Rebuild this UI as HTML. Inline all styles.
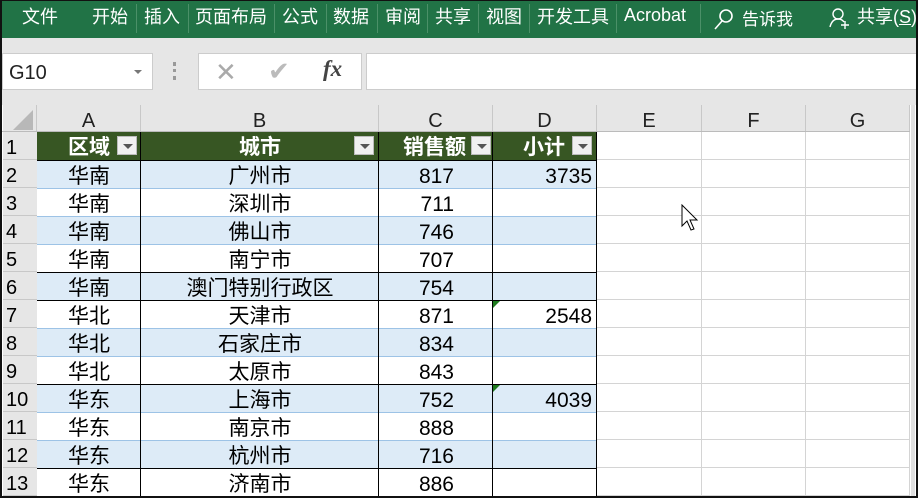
<!DOCTYPE html><html><head><meta charset="utf-8"><style>
*{margin:0;padding:0;box-sizing:border-box}
body{width:918px;height:498px;overflow:hidden;background:#fff;position:relative;font-family:"Liberation Sans","Noto Sans CJK SC",sans-serif}
.a{position:absolute}
.rib{left:0;top:0;width:918px;height:38px;background:#217346;color:#fff;font-size:18px}
.rib span{position:absolute;top:3px}
.sep{position:absolute;top:4px;width:1px;height:29px;background:#4b9068}
.cell{position:absolute;height:28px;line-height:33px;font-size:21px;color:#000;white-space:nowrap}
.hd{position:absolute;top:105px;height:27px;line-height:32px;text-align:center;font-size:20px;color:#222;background:#e6e6e6;border-right:1px solid #c8c8c8}
.rn{position:absolute;left:3px;width:34px;height:28px;line-height:33px;font-size:20px;background:#e6e6e6;border-bottom:1px solid #c8c8c8;padding-left:3px}
.dd{position:absolute;width:20px;height:19px;background:#f0f0f0;border:1px solid #bbb}
.dd:after{content:"";position:absolute;left:5px;top:7px;border-left:5px solid transparent;border-right:5px solid transparent;border-top:5px solid #555}
</style></head><body>
<div class="a rib">
<span style="left:22px">文件</span>
<span style="left:92px">开始</span><div class="sep" style="left:136px"></div>
<span style="left:144px">插入</span><div class="sep" style="left:188px"></div>
<span style="left:195px">页面布局</span><div class="sep" style="left:274px"></div>
<span style="left:282px">公式</span><div class="sep" style="left:326px"></div>
<span style="left:333px">数据</span><div class="sep" style="left:377px"></div>
<span style="left:385px">审阅</span><div class="sep" style="left:427px"></div>
<span style="left:435px">共享</span><div class="sep" style="left:478px"></div>
<span style="left:486px">视图</span><div class="sep" style="left:529px"></div>
<span style="left:537px">开发工具</span><div class="sep" style="left:616px"></div>
<span style="left:624px;top:5px">Acrobat</span><div class="sep" style="left:700px"></div>
<svg class="a" style="left:712px;top:7px" width="24" height="24"><circle cx="14" cy="9" r="6" fill="none" stroke="#fff" stroke-width="1.6"/><line x1="10" y1="14" x2="3" y2="22" stroke="#fff" stroke-width="1.6"/></svg>
<span style="left:742px;font-size:17px;top:5px">告诉我</span>
<svg class="a" style="left:828px;top:6px" width="24" height="24"><circle cx="10" cy="8" r="5" fill="none" stroke="#fff" stroke-width="1.4"/><path d="M2 21 Q4 13 10 13 Q14 13 16 16" fill="none" stroke="#fff" stroke-width="1.4"/><path d="M17 15v8M13 19h8" stroke="#fff" stroke-width="1.4"/></svg>
<span style="left:857px">共享(<u>S</u>)</span>
</div>
<div class="a" style="left:0;top:38px;width:918px;height:67px;background:#e6e6e6"></div>
<div class="a" style="left:2px;top:53px;width:151px;height:37px;background:#fff;border:1px solid #ccc;font-size:20px;line-height:38px;padding-left:6px;color:#222">G10</div>
<div class="a" style="left:134px;top:70px;border-left:4px solid transparent;border-right:4px solid transparent;border-top:4px solid #777"></div>
<div class="a" style="left:173px;top:62px;width:3px;height:18px;border-left:3px dotted #999"></div>
<div class="a" style="left:198px;top:53px;width:164px;height:37px;background:#fff;border:1px solid #ccc"></div>
<div class="a" style="left:215px;top:57px;font-size:26px;color:#aaa">✕</div>
<div class="a" style="left:268px;top:56px;font-size:26px;color:#bbb">✔</div>
<div class="a" style="left:323px;top:56px;font-size:23px;font-style:italic;font-weight:bold;font-family:'Liberation Serif',serif;color:#444">fx</div>
<div class="a" style="left:366px;top:53px;width:552px;height:37px;background:#fff;border:1px solid #ccc"></div>
<div class="a" style="left:3px;top:105px;width:34px;height:27px;background:#e6e6e6;border-right:1px solid #c8c8c8"></div>
<div class="a" style="left:13px;top:110px;width:0;height:0;border-left:20px solid transparent;border-bottom:20px solid #b8b8b8"></div>
<div class="hd" style="left:37px;width:104px">A</div>
<div class="hd" style="left:141px;width:238px">B</div>
<div class="hd" style="left:379px;width:114px">C</div>
<div class="hd" style="left:493px;width:104px">D</div>
<div class="hd" style="left:597px;width:105px">E</div>
<div class="hd" style="left:702px;width:104px">F</div>
<div class="hd" style="left:806px;width:104px">G</div>
<div class="a" style="left:0;top:131px;width:910px;height:1px;background:#bbb"></div>
<div id="g"></div>
<script>
var h='';
var A=['华南','华南','华南','华南','华南','华北','华北','华北','华东','华东','华东','华东'];
var B=['广州市','深圳市','佛山市','南宁市','澳门特别行政区','天津市','石家庄市','太原市','上海市','南京市','杭州市','济南市'];
var C=[817,711,746,707,754,871,834,843,752,888,716,886];
var D={2:3735,7:2548,10:4039};
for(var r=1;r<=13;r++){var t=132+(r-1)*28;
h+='<div class="rn" style="top:'+t+'px">'+r+'</div>';
if(r>1){var bg=(r%2==0)?'#ddebf7':'#fff';
h+='<div class="a" style="left:37px;top:'+t+'px;width:560px;height:28px;background:'+bg+'"></div>';
h+='<div class="a" style="left:37px;top:'+t+'px;width:560px;height:1px;background:'+([2,6,7,10,13].indexOf(r)>=0?'#000':'#9dc3e6')+'"></div>';
var i=r-2;
h+='<div class="cell" style="left:37px;width:104px;text-align:center;top:'+t+'px">'+A[i]+'</div>';
h+='<div class="cell" style="left:141px;width:238px;text-align:center;top:'+t+'px">'+B[i]+'</div>';
h+='<div class="cell" style="left:379px;width:113px;text-align:right;padding-right:38px;top:'+t+'px">'+C[i]+'</div>';
if(D[r])h+='<div class="cell" style="left:493px;width:103px;text-align:right;padding-right:4px;top:'+t+'px">'+D[r]+'</div>';
if(r==7||r==10)h+='<div class="a" style="left:493px;top:'+(t+1)+'px;border-top:7px solid #1e7b1e;border-right:7px solid transparent"></div>';
}
h+='<div class="a" style="left:597px;top:'+(t+27)+'px;width:313px;height:1px;background:#d4d4d4"></div>';
}
h+='<div class="a" style="left:37px;top:132px;width:560px;height:28px;background:#375623"></div>';
h+='<div class="a" style="left:37px;top:132px;width:104px;height:28px;color:#fff;font-weight:bold;font-size:21px;line-height:32px;padding-left:31px">区域</div><div class="dd" style="left:117px;top:136px"></div>';
h+='<div class="a" style="left:141px;top:132px;width:238px;height:28px;color:#fff;font-weight:bold;font-size:21px;line-height:32px;text-align:center">城市</div><div class="dd" style="left:354px;top:136px"></div>';
h+='<div class="a" style="left:379px;top:132px;width:114px;height:28px;color:#fff;font-weight:bold;font-size:21px;line-height:32px;padding-left:24px;overflow:hidden">销售额</div><div class="dd" style="left:471px;top:136px"></div>';
h+='<div class="a" style="left:493px;top:132px;width:104px;height:28px;color:#fff;font-weight:bold;font-size:21px;line-height:32px;padding-left:30px">小计</div><div class="dd" style="left:572px;top:136px"></div>';
[140,378,492,596].forEach(function(x){h+='<div class="a" style="left:'+x+'px;top:132px;width:1px;height:365px;background:#000"></div>'});
[701,805,909].forEach(function(x){h+='<div class="a" style="left:'+x+'px;top:132px;width:1px;height:365px;background:#d4d4d4"></div>'});
document.getElementById('g').innerHTML=h;
</script>
<div class="a" style="left:911px;top:105px;width:4px;height:392px;background:#e0e0e0"></div>
<svg class="a" style="left:681px;top:204px" width="20" height="30"><path d="M1 1 L1 22 L6 17 L10 26 L13 25 L9 16 L16 16 Z" fill="#fff" stroke="#000" stroke-width="1"/></svg>
<div class="a" style="left:0;top:0;width:918px;height:498px;border:2px solid #111;border-top:1px solid #111;pointer-events:none"></div>
</body></html>
